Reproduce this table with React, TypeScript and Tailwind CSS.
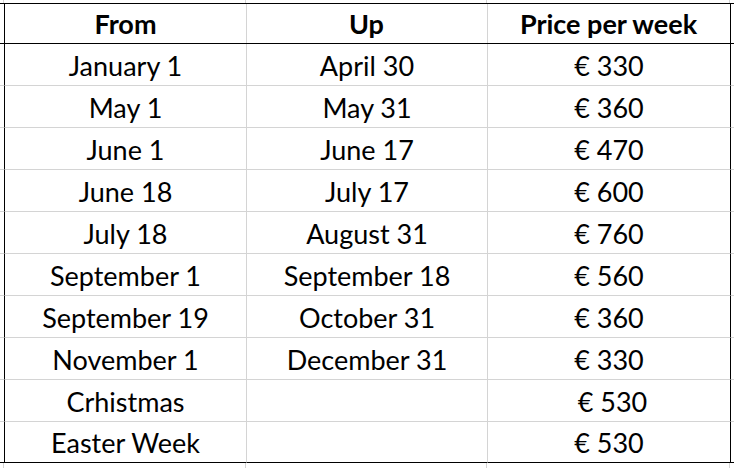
import React from 'react';

const rows = [
  { from: 'January 1', up: 'April 30', price: '€ 330' },
  { from: 'May 1', up: 'May 31', price: '€ 360' },
  { from: 'June 1', up: 'June 17', price: '€ 470' },
  { from: 'June 18', up: 'July 17', price: '€ 600' },
  { from: 'July 18', up: 'August 31', price: '€ 760' },
  { from: 'September 1', up: 'September 18', price: '€ 560' },
  { from: 'September 19', up: 'October 31', price: '€ 360' },
  { from: 'November 1', up: 'December 31', price: '€ 330' },
  { from: 'Crhistmas', up: '', price: ' € 530' },
  { from: 'Easter Week', up: '', price: '€ 530' },
];

const grid = 'border-[#d4d4d4]';

function Strip({ height }: { height: string }) {
  return (
    <div className={`flex ${height}`}>
      <div className={`w-[4px] border-r ${grid}`} />
      <div className={`w-[242px] border-r ${grid}`} />
      <div className={`w-[241px] border-r ${grid}`} />
      <div className={`w-[243px] border-r ${grid}`} />
      <div className="flex-1" />
    </div>
  );
}

export default function App() {
  return (
    <div
      className="w-[734px] h-[468px] bg-white overflow-hidden text-black"
      style={{ fontFamily: 'Lato, "Open Sans", sans-serif' }}
    >
      <Strip height="h-[3px]" />

      {/* header */}
      <div className="flex h-[41px] text-[27px] font-bold">
        <div className="w-[4px] border-y border-black" />
        <div className="w-[242px] border-y border-l border-black flex items-center justify-center pt-[1px]">
          From
        </div>
        <div className="w-[241px] border-y border-black flex items-center justify-center pt-[1px] relative">
          <span className={`absolute left-0 top-0 bottom-0 border-l ${grid}`} />
          Up
        </div>
        <div className="w-[244px] border-y border-r border-black flex items-center justify-center pt-[1px] relative">
          <span className={`absolute left-0 top-0 bottom-0 border-l ${grid}`} />
          Price per week
        </div>
        <div className="flex-1 border-y border-black" />
      </div>

      {rows.map((r, i) => {
        const last = i === rows.length - 1;
        const h = last ? 'h-[41px] border-b border-black' : `h-[42px] border-b ${grid}`;
        return (
          <div key={i} className="flex text-[27px]">
            <div className={`w-[4px] ${h}`} />
            <div className={`w-[242px] border-l border-l-black flex items-center justify-center pt-[3px] ${h}`}>
              {r.from}
            </div>
            <div className={`w-[241px] border-l border-l-[#d4d4d4] flex items-center justify-center pt-[3px] ${h}`}>
              {r.up}
            </div>
            <div className={`w-[244px] border-l border-l-[#d4d4d4] border-r border-r-black flex items-center justify-center pt-[3px] whitespace-pre ${h}`}>
              {r.price}
            </div>
            <div className={`flex-1 ${h}`} />
          </div>
        );
      })}

      <Strip height="h-[5px]" />
    </div>
  );
}
